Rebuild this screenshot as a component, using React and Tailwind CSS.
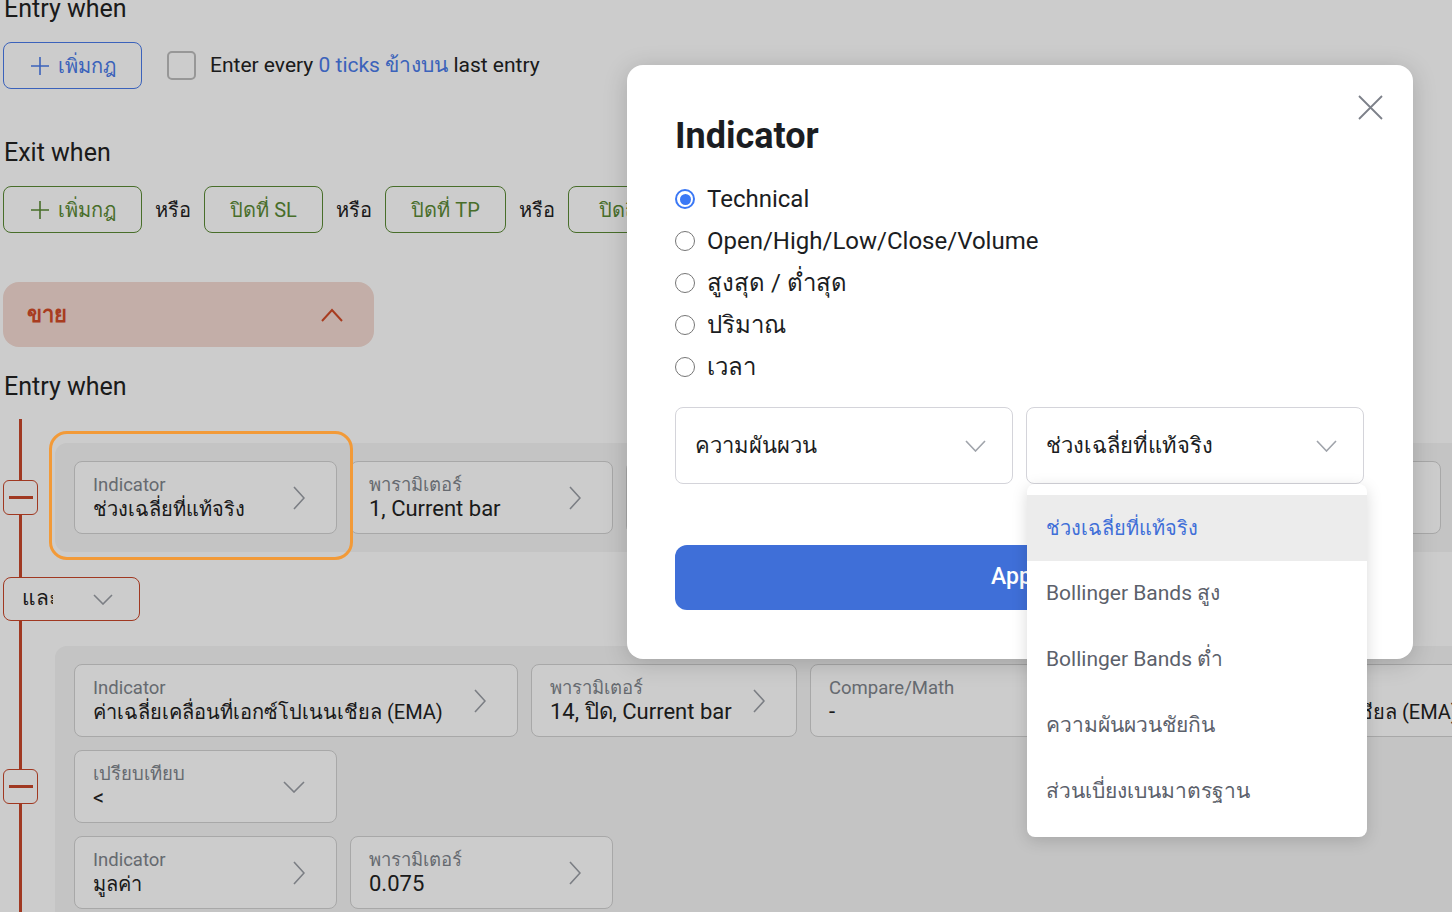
import React from 'react';

const ChevronRight = ({ className = '' }) => (
  <svg width="12" height="24" viewBox="0 0 12 24" className={className}>
    <path d="M1 1 L11 12 L1 23" fill="none" stroke="currentColor" strokeWidth="1.6" />
  </svg>
);

const ChevronDown = ({ className = '', w = 22, h = 12, sw = 1.6 }) => (
  <svg width={w} height={h} viewBox={`0 0 ${w} ${h}`} className={className}>
    <path d={`M1 1 L${w / 2} ${h - 1} L${w - 1} 1`} fill="none" stroke="currentColor" strokeWidth={sw} />
  </svg>
);

const PlusIcon = () => (
  <svg width="20" height="20" viewBox="0 0 20 20">
    <path d="M10 1 V19 M1 10 H19" stroke="currentColor" strokeWidth="1.6" fill="none" />
  </svg>
);

const Card = ({ label, value, w = 'w-[263px]', down = false, thai = false }) => (
  <div className={`${w} shrink-0 h-[73px] rounded-lg border border-[#d2d2d2] bg-white flex items-center justify-between pl-[18px] pr-[31px]`}>
    <div className="flex flex-col whitespace-nowrap">
      <span className="text-[18.5px] leading-[22px] text-[#80858c]">{label}</span>
      <span className={`${thai ? 'text-[20px]' : 'text-[22px]'} leading-[26px] text-[#222]`}>{value}</span>
    </div>
    {down ? <ChevronDown className="text-[#9a9ea5]" /> : <ChevronRight className="text-[#9a9ea5]" />}
  </div>
);

const MinusBtn = () => (
  <div className="ml-[3px] w-[35px] h-[35px] shrink-0 rounded-md border border-[#c9472a] bg-white flex items-center justify-center">
    <div className="w-[24px] h-[3px] bg-[#c9472a]" />
  </div>
);

const Radio = ({ checked, label }) => (
  <div className="h-[42px] flex items-center gap-[12px]">
    {checked ? (
      <span className="w-[20px] h-[20px] rounded-full border-2 border-[#3b78f5] flex items-center justify-center">
        <span className="w-[11px] h-[11px] rounded-full bg-[#3b78f5]" />
      </span>
    ) : (
      <span className="w-[20px] h-[20px] rounded-full border-[1.5px] border-[#767676]" />
    )}
    <span className="text-[24px] text-[#1b1d22]">{label}</span>
  </div>
);

export default function App() {
  const dropItems = ['Bollinger Bands สูง', 'Bollinger Bands ต่ำ', 'ความผันผวนชัยกิน', 'ส่วนเบี่ยงเบนมาตรฐาน'];

  return (
    <div className="relative w-full h-[912px] overflow-hidden bg-white font-['Roboto',sans-serif] text-[#222]">
      <div className="pl-[3px] -mt-[5px]">
        {/* Entry when */}
        <div className="pl-px text-[25px] leading-[28px] text-[#222]">Entry when</div>
        <div className="mt-[19px] flex items-center h-[47px]">
          <button className="h-[47px] w-[139px] rounded-lg border border-[#4a7bea] text-[#4a7bea] flex items-center justify-center gap-[8px] text-[20px]">
            <PlusIcon />
            เพิ่มกฎ
          </button>
          <span className="ml-[25px] w-[29px] h-[29px] rounded-[5px] border-2 border-[#bdbdbd]" />
          <span className="ml-[14px] text-[21px] whitespace-nowrap">
            Enter every <span className="text-[#4a7bea]">0 ticks ข้างบน</span> last entry
          </span>
        </div>

        {/* Exit when */}
        <div className="mt-[50px] pl-px text-[25px] leading-[28px] text-[#222]">Exit when</div>
        <div className="mt-[19px] flex items-center h-[47px] text-[20px] whitespace-nowrap">
          <button className="h-[47px] w-[139px] rounded-lg border border-[#5b8a35] text-[#5b8a35] flex items-center justify-center gap-[8px]">
            <PlusIcon />
            เพิ่มกฎ
          </button>
          <span className="mx-[13px]">หรือ</span>
          <button className="h-[47px] w-[119px] rounded-lg border border-[#5b8a35] text-[#5b8a35]">ปิดที่ SL</button>
          <span className="mx-[13px]">หรือ</span>
          <button className="h-[47px] w-[121px] rounded-lg border border-[#5b8a35] text-[#5b8a35]">ปิดที่ TP</button>
          <span className="mx-[13px]">หรือ</span>
          <button className="h-[47px] w-[150px] rounded-lg border border-[#5b8a35] text-[#5b8a35]">ปิดถึงเวลา</button>
        </div>

        {/* Sell panel */}
        <div className="mt-[49px] h-[65px] w-[371px] rounded-2xl bg-[#f4dad2] flex items-center justify-between pl-[24px] pr-[31px]">
          <span className="text-[22px] font-bold text-[#d34b28]">ขาย</span>
          <svg width="22" height="14" viewBox="0 0 22 14" className="text-[#d34b28]">
            <path d="M1 13 L11 2 L21 13" fill="none" stroke="currentColor" strokeWidth="2" />
          </svg>
        </div>

        <div className="mt-[26px] pl-px text-[25px] leading-[28px] text-[#222]">Entry when</div>

        {/* Rule tree */}
        <div className="relative mt-[18px] -ml-[3px]">
          <div className="absolute left-[19px] top-0 h-[700px] w-[3px] bg-[#c9472a]" />

          {/* group 1 */}
          <div className="relative pt-[24px] flex items-center">
            <MinusBtn />
            <div className="relative ml-[17px] -mr-[100px] flex-1 rounded-xl bg-[#f5f5f5] pl-[19px] py-[18px] flex gap-[13px]">
              <div className="absolute left-[-6px] top-[-12px] w-[304px] h-[129px] rounded-[18px] border-[3px] border-[#f29a38] z-20" />
              <Card label="Indicator" value="ช่วงเฉลี่ยที่แท้จริง" thai />
              <Card label="พารามิเตอร์" value="1, Current bar" />
              <Card label="Compare/Math" value="-" />
              <Card label="Indicator" value="ช่วงเฉลี่ยที่แท้จริง" thai />
              <Card label="พารามิเตอร์" value="1, Current bar" />
            </div>
          </div>

          {/* and */}
          <div className="relative mt-[25px] ml-[3px] w-[137px] h-[44px] rounded-lg border border-[#c9472a] bg-white flex items-center justify-between pl-[18px] pr-[26px]">
            <span className="w-[31px] overflow-hidden whitespace-nowrap text-[21px] font-medium text-[#222]">และ</span>
            <ChevronDown className="text-[#9a9ea5]" w={20} h={11} />
          </div>

          {/* group 2 */}
          <div className="relative mt-[25px] flex items-center">
            <MinusBtn />
            <div className="ml-[17px] -mr-[100px] flex-1 rounded-xl bg-[#f5f5f5] pl-[19px] py-[18px] flex flex-col gap-[13px]">
              <div className="flex gap-[13px]">
                <Card w="w-[444px]" label="Indicator" value="ค่าเฉลี่ยเคลื่อนที่เอกซ์โปเนนเชียล (EMA)" thai />
                <Card w="w-[266px]" label="พารามิเตอร์" value="14, ปิด, Current bar" />
                <Card w="w-[266px]" label="Compare/Math" value="-" />
                <Card w="w-[444px]" label="Indicator" value="ค่าเฉลี่ยเคลื่อนที่เอกซ์โปเนนเชียล (EMA)" thai />
              </div>
              <div className="flex">
                <Card label="เปรียบเทียบ" value="<" down />
              </div>
              <div className="flex gap-[13px]">
                <Card label="Indicator" value="มูลค่า" thai />
                <Card label="พารามิเตอร์" value="0.075" />
              </div>
            </div>
          </div>
        </div>
      </div>

      {/* dim overlay */}
      <div className="absolute inset-0 bg-black/20 z-10" />

      {/* modal */}
      <div className="absolute left-[627px] top-[65px] w-[786px] h-[594px] z-30 rounded-2xl bg-white shadow-[0_4px_24px_rgba(0,0,0,0.18)] px-[48px] pt-[51px]">
        <button className="absolute right-[30px] top-[30px] text-[#7c8089]">
          <svg width="25" height="25" viewBox="0 0 25 25">
            <path d="M1 1 L24 24 M24 1 L1 24" stroke="currentColor" strokeWidth="1.8" fill="none" />
          </svg>
        </button>
        <div className="text-[36px] leading-[40px] font-bold text-[#1b1d22]">Indicator</div>

        <div className="mt-[22px] flex flex-col">
          <Radio checked label="Technical" />
          <Radio label="Open/High/Low/Close/Volume" />
          <Radio label="สูงสุด / ต่ำสุด" />
          <Radio label="ปริมาณ" />
          <Radio label="เวลา" />
        </div>

        <div className="mt-[19px] flex gap-[13px]">
          <div className="w-[338px] h-[77px] rounded-lg border border-[#d4d4da] flex items-center justify-between pl-[19px] pr-[26px]">
            <span className="text-[22px] text-[#1b1d22]">ความผันผวน</span>
            <ChevronDown className="text-[#a0a4ab]" w={21} h={12} />
          </div>
          <div className="relative w-[338px] h-[77px] rounded-lg border border-[#d4d4da] flex items-center justify-between pl-[19px] pr-[26px]">
            <span className="text-[22px] text-[#1b1d22]">ช่วงเฉลี่ยที่แท้จริง</span>
            <ChevronDown className="text-[#a0a4ab]" w={21} h={12} />

            {/* dropdown list */}
            <div className="absolute left-0 top-full mt-[1px] w-[340px] z-40 rounded-lg bg-white shadow-[0_4px_16px_rgba(0,0,0,0.15)] pt-[11px] pb-[12px]">
              <div className="h-[66px] bg-[#ececec] flex items-center pl-[19px] text-[20px] font-medium text-[#3f6fd8]">
                ช่วงเฉลี่ยที่แท้จริง
              </div>
              {dropItems.map((it) => (
                <div key={it} className="h-[66px] flex items-center pl-[19px] text-[21px] text-[#5c616b]">
                  {it}
                </div>
              ))}
            </div>
          </div>
        </div>

        <button className="mt-[61px] w-full h-[65px] rounded-xl bg-[#3f6fd8] text-white text-[23px] font-medium">
          Apply
        </button>
      </div>
    </div>
  );
}
